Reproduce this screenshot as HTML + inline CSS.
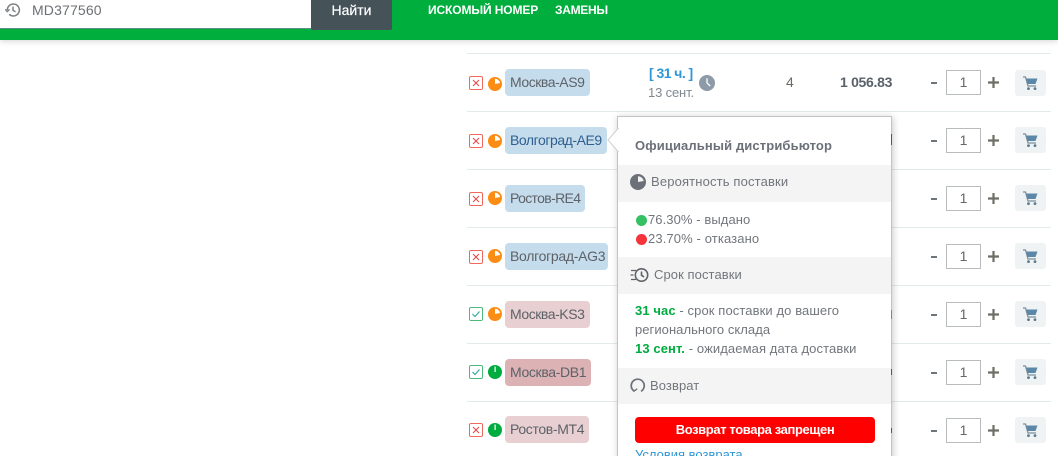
<!DOCTYPE html>
<html style="height:456px;overflow:hidden"><head><meta charset="utf-8">
<style>
html,body{margin:0;padding:0}
body{width:1058px;height:456px;overflow:hidden;position:relative;background:#fff;font-family:"Liberation Sans",sans-serif;color:#6b7076;font-size:13px}
#w{position:absolute;left:0;top:0;width:1058px;height:456px;overflow:hidden;background:#fff}
.a{position:absolute;white-space:nowrap}
.sep{position:absolute;left:467px;width:584px;height:1px;background:#e3ebea}
.chk{position:absolute;left:469px;width:12px;height:12px;border:1px solid #f0695c;border-radius:2px;background:#fff}
.chk.g{border-color:#4fb87c}
.chk svg{position:absolute;left:0;top:0}
.pie{position:absolute;left:488px}
.tag{position:absolute;left:505px;height:27px;line-height:27px;border-radius:4px;padding:0 5px;box-sizing:border-box;font-size:14px;color:#5d6268;white-space:nowrap}
.minus{position:absolute;left:931px;width:6px;height:2px;background:#6e757b}
.qty{position:absolute;left:946px;width:33px;height:23px;border:1px solid #b9bcbc;background:#fff;text-align:center;line-height:23px;font-size:14px;color:#666}
.plus{position:absolute;left:988px}
.cart{position:absolute;left:1015px;width:31px;height:26px;background:#eff3f4;border-radius:3px}
.cart svg{position:absolute;left:8px;top:6px}
.band{position:absolute;left:0;width:273px;background:#f4f4f4}
.t{font-size:13px;line-height:16px;color:#72767c;letter-spacing:.08px}
</style></head><body>
<div id="w">
<div class="a" style="left:0;top:0;width:1058px;height:40px;background:#00ae3e;box-shadow:0 1px 6px rgba(0,0,0,.18)"></div>
<div class="a" style="left:0;top:0;width:311px;height:28px;background:#fff;border-bottom:1px solid #5a8f86"></div>
<svg class="a" style="left:5px;top:2px" width="16" height="16" viewBox="0 0 24 24" fill="none" stroke="#7c7f82" stroke-width="2.2"><path d="M3.5 12a9 9 0 1 1 2.8 6.5"/><path d="M0.5 11l3 3.4 3.3-3.4" /><path d="M12 7v5.5l3.8 2.2"/></svg>
<div class="a" style="left:32px;top:2px;font-size:14px;line-height:16px;color:#6c7074;letter-spacing:.15px">MD377560</div>
<div class="a" style="left:311px;top:0;width:81px;height:30px;background:#455258;border-radius:0 0 2px 2px;color:#fff;font-size:14px;line-height:20px;text-align:center;font-weight:500;-webkit-text-stroke:.2px #fff">Найти</div>
<div class="a" style="left:428px;top:3px;font-size:12px;line-height:15px;color:#fff;font-weight:bold;letter-spacing:-.12px">ИСКОМЫЙ НОМЕР</div>
<div class="a" style="left:555px;top:3px;font-size:12px;line-height:15px;color:#fff;font-weight:bold;letter-spacing:-.3px">ЗАМЕНЫ</div>

<div class="sep" style="top:53px"></div><div class="sep" style="top:111px"></div><div class="sep" style="top:169px"></div><div class="sep" style="top:227px"></div><div class="sep" style="top:285px"></div><div class="sep" style="top:343px"></div><div class="sep" style="top:401px"></div>

<!-- checks -->
<div class="chk" style="top:76px"><svg width="12" height="12"><path d="M3 3l6 6M9 3l-6 6" stroke="#ee4a4a" stroke-width="1.1"/></svg></div>
<div class="chk" style="top:134px"><svg width="12" height="12"><path d="M3 3l6 6M9 3l-6 6" stroke="#ee4a4a" stroke-width="1.1"/></svg></div>
<div class="chk" style="top:192px"><svg width="12" height="12"><path d="M3 3l6 6M9 3l-6 6" stroke="#ee4a4a" stroke-width="1.1"/></svg></div>
<div class="chk" style="top:250px"><svg width="12" height="12"><path d="M3 3l6 6M9 3l-6 6" stroke="#ee4a4a" stroke-width="1.1"/></svg></div>
<div class="chk g" style="top:307px"><svg width="12" height="12"><path d="M2.5 6l2.5 2.5 4.5-5" fill="none" stroke="#35a9a0" stroke-width="1.2"/></svg></div>
<div class="chk g" style="top:365px"><svg width="12" height="12"><path d="M2.5 6l2.5 2.5 4.5-5" fill="none" stroke="#35a9a0" stroke-width="1.2"/></svg></div>
<div class="chk" style="top:423px"><svg width="12" height="12"><path d="M3 3l6 6M9 3l-6 6" stroke="#ee4a4a" stroke-width="1.1"/></svg></div>

<!-- pies -->
<svg class="pie" style="top:77px" width="14" height="14"><circle cx="7" cy="7" r="7" fill="#fb8c14"/><path d="M7 7V1.8A5.2 5.2 0 0 1 12.1 6Z" fill="#fff"/></svg>
<svg class="pie" style="top:134px" width="14" height="14"><circle cx="7" cy="7" r="7" fill="#fb8c14"/><path d="M7 7V1.8A5.2 5.2 0 0 1 12.1 6Z" fill="#fff"/></svg>
<svg class="pie" style="top:191px" width="14" height="14"><circle cx="7" cy="7" r="7" fill="#fb8c14"/><path d="M7 7V1.8A5.2 5.2 0 0 1 12.1 6Z" fill="#fff"/></svg>
<svg class="pie" style="top:249px" width="14" height="14"><circle cx="7" cy="7" r="7" fill="#fb8c14"/><path d="M7 7V1.8A5.2 5.2 0 0 1 12.1 6Z" fill="#fff"/></svg>
<svg class="pie" style="top:307px" width="14" height="14"><circle cx="7" cy="7" r="7" fill="#fb8c14"/><path d="M7 7V1.8A5.2 5.2 0 0 1 12.1 6Z" fill="#fff"/></svg>
<svg class="pie" style="top:365px" width="14" height="14"><circle cx="7" cy="7" r="7" fill="#00ab3f"/><path d="M6.5 7V1.5H7.7V7Z" fill="#fff"/></svg>
<svg class="pie" style="top:423px" width="14" height="14"><circle cx="7" cy="7" r="7" fill="#00ab3f"/><path d="M6.5 7V1.5H7.7V7Z" fill="#fff"/></svg>

<!-- tags -->
<div class="tag" style="top:69px;width:85px;background:#c5dcec;letter-spacing:-.45px">Москва-AS9</div>
<div class="tag" style="top:127px;width:102px;background:#c5dcec;color:#2f5f8f;letter-spacing:-.45px">Волгоград-AE9</div>
<div class="tag" style="top:185px;width:80px;background:#c5dcec;letter-spacing:-.65px">Ростов-RE4</div>
<div class="tag" style="top:243px;width:103px;background:#c5dcec;letter-spacing:-.3px">Волгоград-AG3</div>
<div class="tag" style="top:301px;width:85px;background:#e8cfd2;letter-spacing:-.45px">Москва-KS3</div>
<div class="tag" style="top:359px;width:86px;background:#dcb2b5;letter-spacing:-.35px">Москва-DB1</div>
<div class="tag" style="top:416px;width:84px;background:#e8cfd2;letter-spacing:-.35px">Ростов-MT4</div>

<!-- first row -->
<div class="a" style="left:649px;top:65px;font-size:14px;line-height:16px;font-weight:bold;color:#2f97d6;letter-spacing:-.55px">[ 31 ч. ]</div>
<div class="a" style="left:648px;top:85px;font-size:13px;line-height:15px;color:#7f8a90;letter-spacing:-.15px">13 сент.</div>
<svg class="a" style="left:699px;top:75px" width="16" height="16"><circle cx="8" cy="8" r="8" fill="#8d9aa7"/><path d="M8 3.2V8l3.2 3" fill="none" stroke="#fff" stroke-width="1.3"/></svg>
<div class="a" style="left:786px;top:74px;font-size:14px;line-height:16px;color:#6a6a5e">4</div>
<div class="a" style="left:840px;top:74px;font-size:14px;line-height:16px;font-weight:bold;color:#59616a;letter-spacing:-.3px">1 056.83</div>

<!-- qty rows -->
<div class="minus" style="top:82px"></div><div class="qty" style="top:70px">1</div>
<div class="minus" style="top:140px"></div><div class="qty" style="top:128px">1</div>
<div class="minus" style="top:198px"></div><div class="qty" style="top:186px">1</div>
<div class="minus" style="top:256px"></div><div class="qty" style="top:244px">1</div>
<div class="minus" style="top:314px"></div><div class="qty" style="top:302px">1</div>
<div class="minus" style="top:372px"></div><div class="qty" style="top:360px">1</div>
<div class="minus" style="top:430px"></div><div class="qty" style="top:418px">1</div>
<svg class="plus" style="top:77px" width="11" height="11"><path d="M0 5.5h11M5.5 0v11" stroke="#6e6e66" stroke-width="2.2"/></svg>
<svg class="plus" style="top:135px" width="11" height="11"><path d="M0 5.5h11M5.5 0v11" stroke="#6e6e66" stroke-width="2.2"/></svg>
<svg class="plus" style="top:193px" width="11" height="11"><path d="M0 5.5h11M5.5 0v11" stroke="#6e6e66" stroke-width="2.2"/></svg>
<svg class="plus" style="top:251px" width="11" height="11"><path d="M0 5.5h11M5.5 0v11" stroke="#6e6e66" stroke-width="2.2"/></svg>
<svg class="plus" style="top:309px" width="11" height="11"><path d="M0 5.5h11M5.5 0v11" stroke="#6e6e66" stroke-width="2.2"/></svg>
<svg class="plus" style="top:367px" width="11" height="11"><path d="M0 5.5h11M5.5 0v11" stroke="#6e6e66" stroke-width="2.2"/></svg>
<svg class="plus" style="top:425px" width="11" height="11"><path d="M0 5.5h11M5.5 0v11" stroke="#6e6e66" stroke-width="2.2"/></svg>

<div class="cart" style="top:70px"><svg width="15" height="15"><path d="M0 1h2.5L5 10h8" fill="none" stroke="#7a8f9f" stroke-width="1.3"/><path d="M3 2.5h11.5L12.5 8H4.6Z" fill="#5b88a8"/><circle cx="5.5" cy="12.6" r="1.4" fill="#5b7a90"/><circle cx="12" cy="12.6" r="1.4" fill="#5b7a90"/></svg></div>
<div class="cart" style="top:127px"><svg width="15" height="15"><path d="M0 1h2.5L5 10h8" fill="none" stroke="#7a8f9f" stroke-width="1.3"/><path d="M3 2.5h11.5L12.5 8H4.6Z" fill="#5b88a8"/><circle cx="5.5" cy="12.6" r="1.4" fill="#5b7a90"/><circle cx="12" cy="12.6" r="1.4" fill="#5b7a90"/></svg></div>
<div class="cart" style="top:185px"><svg width="15" height="15"><path d="M0 1h2.5L5 10h8" fill="none" stroke="#7a8f9f" stroke-width="1.3"/><path d="M3 2.5h11.5L12.5 8H4.6Z" fill="#5b88a8"/><circle cx="5.5" cy="12.6" r="1.4" fill="#5b7a90"/><circle cx="12" cy="12.6" r="1.4" fill="#5b7a90"/></svg></div>
<div class="cart" style="top:243px"><svg width="15" height="15"><path d="M0 1h2.5L5 10h8" fill="none" stroke="#7a8f9f" stroke-width="1.3"/><path d="M3 2.5h11.5L12.5 8H4.6Z" fill="#5b88a8"/><circle cx="5.5" cy="12.6" r="1.4" fill="#5b7a90"/><circle cx="12" cy="12.6" r="1.4" fill="#5b7a90"/></svg></div>
<div class="cart" style="top:301px"><svg width="15" height="15"><path d="M0 1h2.5L5 10h8" fill="none" stroke="#7a8f9f" stroke-width="1.3"/><path d="M3 2.5h11.5L12.5 8H4.6Z" fill="#5b88a8"/><circle cx="5.5" cy="12.6" r="1.4" fill="#5b7a90"/><circle cx="12" cy="12.6" r="1.4" fill="#5b7a90"/></svg></div>
<div class="cart" style="top:359px"><svg width="15" height="15"><path d="M0 1h2.5L5 10h8" fill="none" stroke="#7a8f9f" stroke-width="1.3"/><path d="M3 2.5h11.5L12.5 8H4.6Z" fill="#5b88a8"/><circle cx="5.5" cy="12.6" r="1.4" fill="#5b7a90"/><circle cx="12" cy="12.6" r="1.4" fill="#5b7a90"/></svg></div>
<div class="cart" style="top:417px"><svg width="15" height="15"><path d="M0 1h2.5L5 10h8" fill="none" stroke="#7a8f9f" stroke-width="1.3"/><path d="M3 2.5h11.5L12.5 8H4.6Z" fill="#5b88a8"/><circle cx="5.5" cy="12.6" r="1.4" fill="#5b7a90"/><circle cx="12" cy="12.6" r="1.4" fill="#5b7a90"/></svg></div>

<!-- popup -->
<div class="a" style="left:617px;top:116px;width:273px;height:360px;background:#fff;border:1px solid #c4c4c4;box-shadow:1px 1px 7px rgba(0,0,0,.22)">
  <div class="band" style="top:48px;height:37px"></div>
  <div class="band" style="top:140px;height:37px"></div>
  <div class="band" style="top:251px;height:36px"></div>
</div>
<!-- edge remnants over popup shadow -->
<div class="a" style="left:891px;top:134px;width:1px;height:11px;background:#2f5f8f"></div>
<div class="a" style="left:891px;top:310px;width:1px;height:9px;background:#6a8aa5"></div>
<div class="a" style="left:891px;top:369px;width:1px;height:6px;background:#2f5f8f"></div>
<div class="a" style="left:891px;top:428px;width:1px;height:5px;background:#2f5f8f"></div>
<svg class="a" style="left:607px;top:127px" width="12" height="26"><path d="M11.5 1L1 13 11.5 25" fill="#fff" stroke="#cfcfcf"/><path d="M11 2v22h1.5V2Z" fill="#fff"/></svg>

<div class="a" style="left:635px;top:138px;font-size:13px;line-height:15px;font-weight:bold;color:#6b7078;letter-spacing:.12px">Официальный дистрибьютор</div>

<svg class="a" style="left:630px;top:174px" width="16" height="16"><circle cx="8" cy="8" r="8" fill="#6b7079"/><path d="M8 8V2.2A5.8 5.8 0 0 1 13.7 7Z" fill="#f4f4f4"/></svg>
<div class="a t" style="left:651px;top:174px;letter-spacing:.15px">Вероятность поставки</div>

<div class="a" style="left:636px;top:215px;width:11px;height:11px;border-radius:50%;background:#33c163"></div>
<div class="a t" style="left:648px;top:212px">76.30% - выдано</div>
<div class="a" style="left:636px;top:234px;width:11px;height:11px;border-radius:50%;background:#f5333a"></div>
<div class="a t" style="left:648px;top:231px;letter-spacing:.12px">23.70% - отказано</div>

<svg class="a" style="left:630px;top:266px" width="20" height="18" fill="none" stroke="#5d6268" stroke-width="1.6"><circle cx="11.5" cy="9" r="6.2"/><path d="M11.5 5.5V9.3l2.6 1.6"/><path d="M1 4.5h5M.5 9h3M1 13.5h5" stroke-width="1.2"/></svg>
<div class="a t" style="left:654px;top:267px">Срок поставки</div>

<div class="a t" style="left:635px;top:303px;letter-spacing:.1px"><b style="color:#00ab3f">31 час</b> - срок поставки до вашего</div>
<div class="a t" style="left:635px;top:322px;letter-spacing:.05px">регионального склада</div>
<div class="a t" style="left:635px;top:341px;letter-spacing:.1px"><b style="color:#00ab3f">13 сент.</b> - ожидаемая дата доставки</div>

<svg class="a" style="left:630px;top:377px" width="16" height="16" fill="none" stroke="#6b7079" stroke-width="1.7"><path d="M4 14a6.5 6.5 0 1 1 7 .3"/><path d="M1 10.5l3 3.7 3.2-2.4" stroke-width="1.3"/></svg>
<div class="a t" style="left:650px;top:378px">Возврат</div>

<div class="a" style="left:635px;top:417px;width:240px;height:26px;border-radius:4px;background:#ff0000;color:#fff;font-size:13px;line-height:25px;text-align:center;font-weight:bold;letter-spacing:-.38px">Возврат товара запрещен</div>
<div class="a" style="left:635px;top:447px;font-size:13px;line-height:16px;color:#2f97d6">Условия возврата</div>
</div>
</body></html>
